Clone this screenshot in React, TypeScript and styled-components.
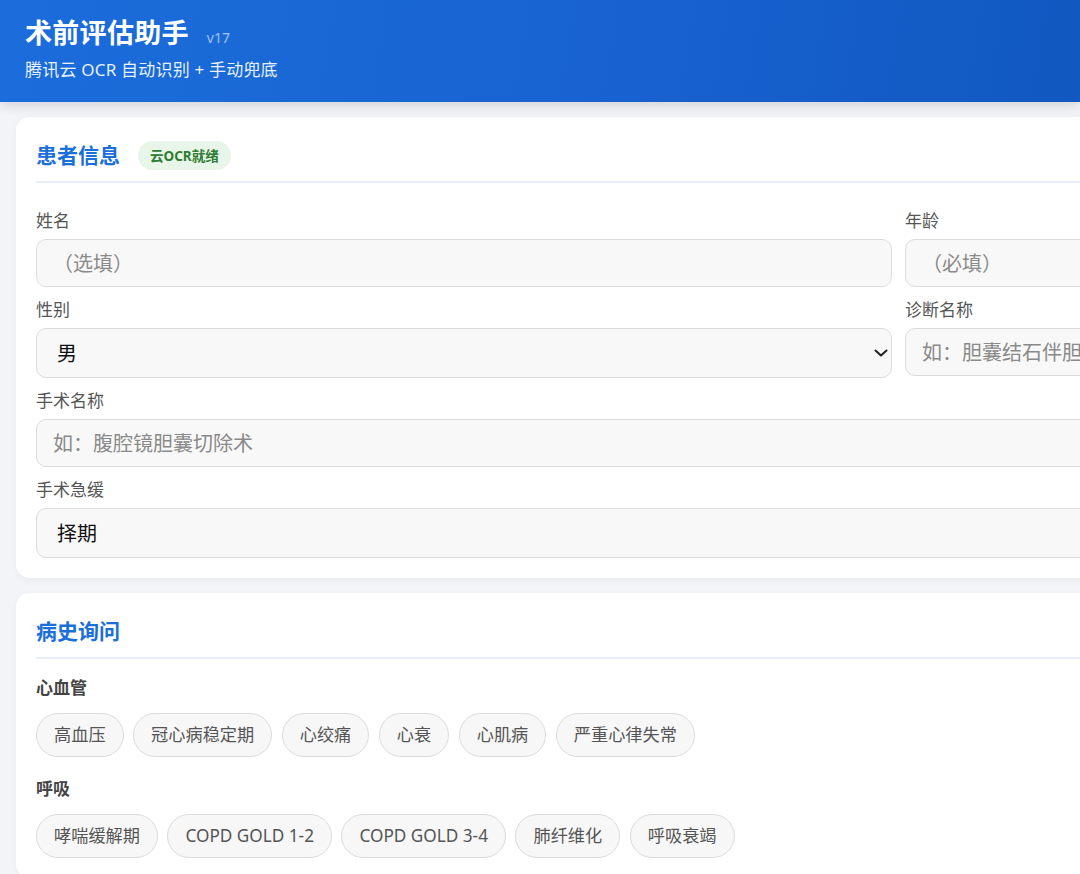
import React from "react";
import styled, { createGlobalStyle } from "styled-components";

const Global = createGlobalStyle`
  html, body {
    margin: 0;
    padding: 0;
    overflow: hidden;
    background: #f2f4f8;
  }
  body {
    font-family: "Noto Sans", "Noto Sans CJK SC", sans-serif;
    color: #333;
  }
  * { box-sizing: border-box; }
`;

const Page = styled.div`
  width: 100%;
  min-height: 874px;
  background: #f2f4f8;
`;

const Header = styled.header`
  width: 100%;
  height: 102px;
  padding: 15px 25px 0;
  background: linear-gradient(100deg, #1b6ddb 0%, #1762d0 60%, #1158c0 100%);
  box-shadow: 0 3px 12px rgba(0, 0, 0, 0.14);
  color: #fff;
  position: relative;
  z-index: 1;
`;

const TitleRow = styled.div`
  display: flex;
  align-items: baseline;
  gap: 18px;
`;

const Title = styled.h1`
  margin: 0;
  font-size: 27px;
  line-height: 36px;
  font-weight: 700;
  letter-spacing: 0.3px;
`;

const Version = styled.span`
  font-size: 14px;
  color: rgba(255, 255, 255, 0.6);
`;

const Subtitle = styled.div`
  margin-top: 7px;
  font-size: 17px;
  line-height: 24px;
  letter-spacing: 0.2px;
  color: rgba(255, 255, 255, 0.92);
`;

const Main = styled.main`
  padding: 15px 16px 0;
  display: flex;
  flex-direction: column;
  gap: 15px;
`;

const Card = styled.section`
  width: 1337px;
  flex-shrink: 0;
  background: #fff;
  border-radius: 14px;
  padding: 20px;
  box-shadow: 0 2px 8px rgba(0, 0, 0, 0.04);
`;

const CardHead = styled.div<{ $space: number }>`
  display: flex;
  align-items: center;
  gap: 18px;
  height: 46px;
  padding-bottom: 8px;
  border-bottom: 2px solid #e6eefa;
  margin-bottom: ${(p) => p.$space}px;
`;

const CardTitle = styled.h2`
  margin: 0;
  font-size: 21px;
  line-height: 36px;
  font-weight: 700;
  color: #1a6fd8;
`;

const Badge = styled.span`
  display: inline-flex;
  align-items: center;
  height: 29px;
  padding: 0 12px;
  border-radius: 15px;
  background: #e8f5e9;
  color: #2e7d32;
  font-size: 13.5px;
  font-weight: 700;
`;

const Grid = styled.div`
  display: grid;
  grid-template-columns: 2fr 1fr;
  column-gap: 13px;
`;

const Field = styled.div<{ $full?: boolean }>`
  grid-column: ${(p) => (p.$full ? "1 / -1" : "auto")};
  display: flex;
  flex-direction: column;
  margin-bottom: 12px;
  &:last-child {
    margin-bottom: 0;
  }
`;

const Label = styled.label`
  font-size: 17px;
  line-height: 22px;
  color: #555;
  margin-bottom: 7px;
`;

const Input = styled.input`
  height: 48px;
  width: 100%;
  padding: 0 16px;
  border: 1px solid #dcdcdc;
  border-radius: 10px;
  background: #f8f8f8;
  font-family: inherit;
  font-size: 20px;
  color: #222;
  outline: none;
  &::placeholder {
    color: #8a8a8a;
  }
`;

const SelectWrap = styled.div`
  position: relative;
  width: 100%;
`;

const Select = styled.select`
  appearance: none;
  -webkit-appearance: none;
  height: 50px;
  width: 100%;
  padding: 0 40px 0 20px;
  border: 1px solid #dcdcdc;
  border-radius: 10px;
  background: #f8f8f8;
  font-family: inherit;
  font-size: 20px;
  color: #111;
  outline: none;
`;

const Chevron = styled.svg`
  position: absolute;
  right: 4px;
  top: 50%;
  transform: translateY(-50%);
  pointer-events: none;
`;

const SubHead = styled.div<{ $top: number }>`
  font-size: 17px;
  line-height: 22px;
  font-weight: 700;
  color: #444;
  margin-top: ${(p) => p.$top}px;
  margin-bottom: 14px;
`;

const Chips = styled.div`
  display: flex;
  flex-wrap: wrap;
  gap: 9.5px;
`;

const Chip = styled.button`
  height: 44px;
  padding: 0 17px;
  border: 1px solid #dcdcdc;
  border-radius: 22px;
  background: #f7f7f7;
  color: #555;
  font-family: inherit;
  font-size: 17.2px;
  line-height: 24px;
  cursor: pointer;
`;

const cardio = ["高血压", "冠心病稳定期", "心绞痛", "心衰", "心肌病", "严重心律失常"];
const resp = ["哮喘缓解期", "COPD GOLD 1-2", "COPD GOLD 3-4", "肺纤维化", "呼吸衰竭"];

function Arrow() {
  return (
    <Chevron width="14" height="8" viewBox="0 0 14 8" fill="none">
      <polyline
        points="1.5,1.5 7,6.5 12.5,1.5"
        stroke="#222"
        strokeWidth="2"
        strokeLinecap="round"
        strokeLinejoin="round"
      />
    </Chevron>
  );
}

export default function App() {
  return (
    <Page>
      <Global />
      <Header>
        <TitleRow>
          <Title>术前评估助手</Title>
          <Version>v17</Version>
        </TitleRow>
        <Subtitle>腾讯云 OCR 自动识别 + 手动兜底</Subtitle>
      </Header>
      <Main>
        <Card>
          <CardHead $space={27}>
            <CardTitle>患者信息</CardTitle>
            <Badge>云OCR就绪</Badge>
          </CardHead>
          <Grid>
            <Field>
              <Label>姓名</Label>
              <Input placeholder="（选填）" />
            </Field>
            <Field>
              <Label>年龄</Label>
              <Input placeholder="（必填）" />
            </Field>
            <Field>
              <Label>性别</Label>
              <SelectWrap>
                <Select defaultValue="男">
                  <option>男</option>
                  <option>女</option>
                </Select>
                <Arrow />
              </SelectWrap>
            </Field>
            <Field>
              <Label>诊断名称</Label>
              <Input placeholder="如：胆囊结石伴胆囊炎" />
            </Field>
            <Field $full>
              <Label>手术名称</Label>
              <Input placeholder="如：腹腔镜胆囊切除术" />
            </Field>
            <Field $full>
              <Label>手术急缓</Label>
              <SelectWrap>
                <Select defaultValue="择期">
                  <option>择期</option>
                  <option>限期</option>
                  <option>急诊</option>
                </Select>
                <Arrow />
              </SelectWrap>
            </Field>
          </Grid>
        </Card>
        <Card>
          <CardHead $space={0}>
            <CardTitle>病史询问</CardTitle>
          </CardHead>
          <SubHead $top={18}>心血管</SubHead>
          <Chips>
            {cardio.map((c) => (
              <Chip key={c}>{c}</Chip>
            ))}
          </Chips>
          <SubHead $top={21}>呼吸</SubHead>
          <Chips>
            {resp.map((c) => (
              <Chip key={c}>{c}</Chip>
            ))}
          </Chips>
        </Card>
      </Main>
    </Page>
  );
}
